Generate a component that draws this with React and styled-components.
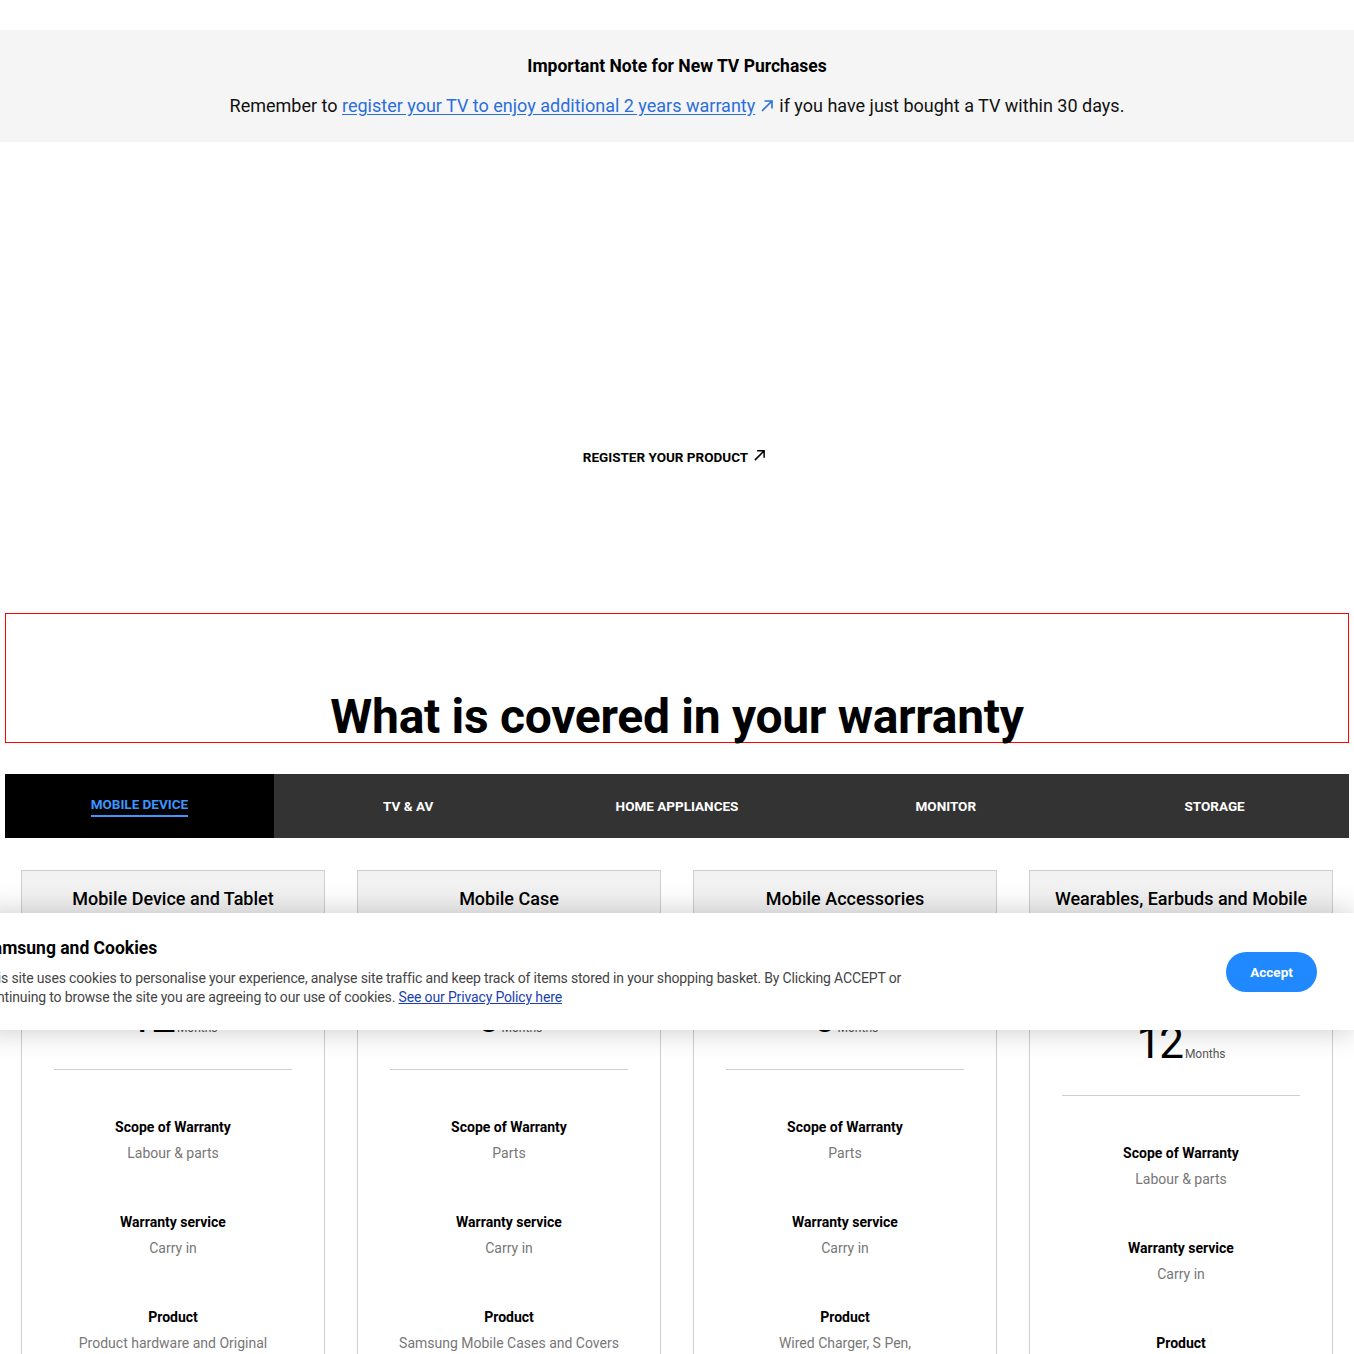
import React from "react";
import styled, { createGlobalStyle } from "styled-components";

const FONT = `Roboto, "Liberation Sans", sans-serif`;

const GlobalStyle = createGlobalStyle`
  html, body {
    margin: 0;
    padding: 0;
    background: #fff;
    font-family: ${FONT};
    color: #000;
  }
  #root {
    position: relative;
    min-height: 1354px;
    overflow: hidden;
  }
`;

const TopStrip = styled.div`
  height: 30px;
`;

const NoteBand = styled.section`
  background: #f5f5f5;
  padding: 25px 0 25px;
  text-align: center;
`;

const NoteTitle = styled.h3`
  margin: 0;
  font-size: 17.5px;
  line-height: 22px;
  font-weight: 700;
`;

const NoteText = styled.p`
  margin: 18px 0 0;
  font-size: 18px;
  line-height: 22px;
  color: #111;
`;

const NoteLink = styled.a`
  color: #2a6fdb;
  text-decoration: underline;
  text-underline-offset: 2px;
`;

const ArrowSvg = styled.svg`
  width: ${(p) => p.size}px;
  height: ${(p) => p.size}px;
  margin: 0 5px 0 5px;
  vertical-align: ${(p) => (p.size > 13 ? "-1px" : "0px")};
`;

const Arrow = ({ size = 14, color = "#000" }) => (
  <ArrowSvg size={size} viewBox="0 0 14 14" fill="none">
    <path d="M2 12 L12 2 M4.5 2 H12 V9.5" stroke={color} strokeWidth="1.6" />
  </ArrowSvg>
);

const RegisterArea = styled.section`
  height: 471px;
  box-sizing: border-box;
  padding-top: 305px;
  text-align: center;
`;

const RegisterLink = styled.a`
  font-size: 13.5px;
  line-height: 20px;
  font-weight: 700;
  color: #000;
  text-decoration: none;
`;

const Main = styled.main`
  margin: 0 5px;
`;

const HeadingBox = styled.div`
  border: 1px solid #ff0000;
  height: 130px;
  box-sizing: border-box;
  padding-top: 72px;
  text-align: center;
`;

const Heading = styled.h2`
  margin: 0;
  font-size: 48px;
  line-height: 62px;
  font-weight: 700;
  letter-spacing: -0.3px;
`;

const TabBar = styled.nav`
  margin-top: 31px;
  display: grid;
  grid-template-columns: repeat(5, 1fr);
  height: 64px;
  background: #333;
`;

const Tab = styled.div`
  display: flex;
  align-items: center;
  justify-content: center;
  background: ${(p) => (p.active ? "#000" : "transparent")};
`;

const TabLabel = styled.span`
  font-size: 13.5px;
  font-weight: 700;
  line-height: 18px;
  color: ${(p) => (p.active ? "#3d95ff" : "#fff")};
  padding-bottom: 2px;
  border-bottom: 2px solid ${(p) => (p.active ? "#3d95ff" : "transparent")};
  margin-top: ${(p) => (p.active ? "0" : "4px")};
`;

const CardGrid = styled.div`
  margin-top: 32px;
  padding: 0 16px;
  display: grid;
  grid-template-columns: repeat(4, 1fr);
  gap: 32px;
  align-items: start;
`;

const Card = styled.article`
  border: 1px solid #cfcfcf;
  background: #fff;
`;

const CardHead = styled.div`
  background: #f2f2f2;
  padding: 15px 16px 16px;
  text-align: center;
`;

const CardTitle = styled.h4`
  margin: 0;
  font-size: 18px;
  line-height: 26px;
  font-weight: 500;
  white-space: pre-line;
`;

const CardBody = styled.div`
  padding: 67px 32px 0;
  text-align: center;
`;

const Period = styled.div`
  display: flex;
  justify-content: center;
  align-items: baseline;
  gap: 3px;
`;

const PeriodNum = styled.span`
  font-size: 44px;
  line-height: 44px;
  font-weight: 400;
  letter-spacing: -2px;
`;

const PeriodUnit = styled.span`
  font-size: 12px;
  color: #555;
`;

const Divider = styled.hr`
  border: 0;
  border-top: 1px solid #cfcfcf;
  margin: 30px 0 47px;
`;

const Spec = styled.div`
  margin-bottom: 49px;
`;

const SpecLabel = styled.div`
  font-size: 14px;
  line-height: 20px;
  font-weight: 700;
`;

const SpecValue = styled.div`
  margin-top: 6px;
  font-size: 14px;
  line-height: 20px;
  color: #777;
  white-space: pre-line;
`;

const CookieBar = styled.div`
  position: absolute;
  top: 913px;
  left: -18px;
  right: 0;
  height: 117px;
  box-sizing: border-box;
  background: #fff;
  box-shadow: 0 0 28px rgba(0, 0, 0, 0.22);
  display: flex;
  align-items: center;
  justify-content: space-between;
  padding: 0 37px 0 0;
`;

const CookieText = styled.div`
  align-self: flex-start;
  padding-top: 22px;
`;

const CookieTitle = styled.div`
  font-size: 17.5px;
  line-height: 26px;
  font-weight: 700;
`;

const CookieBody = styled.p`
  margin: 8px 0 0;
  font-size: 14px;
  line-height: 19px;
  letter-spacing: -0.15px;
  color: #444;
`;

const PolicyLink = styled.a`
  color: #1a3fb0;
  text-decoration: underline;
`;

const AcceptButton = styled.button`
  width: 91px;
  height: 40px;
  border: 0;
  border-radius: 20px;
  background: #2189ff;
  color: #fff;
  font-family: ${FONT};
  font-size: 13.5px;
  font-weight: 700;
  cursor: pointer;
`;

const tabs = ["MOBILE DEVICE", "TV & AV", "HOME APPLIANCES", "MONITOR", "STORAGE"];

const cards = [
  {
    title: "Mobile Device and Tablet",
    months: "12",
    scope: "Labour & parts",
    service: "Carry in",
    product: "Product hardware and Original\nAccessories",
  },
  {
    title: "Mobile Case",
    months: "6",
    scope: "Parts",
    service: "Carry in",
    product: "Samsung Mobile Cases and Covers",
  },
  {
    title: "Mobile Accessories",
    months: "6",
    scope: "Parts",
    service: "Carry in",
    product: "Wired Charger, S Pen,\nWireless Charger",
  },
  {
    title: "Wearables, Earbuds and Mobile\nAccessories",
    months: "12",
    scope: "Labour & parts",
    service: "Carry in",
    product: "Galaxy Watch, Galaxy Buds",
  },
];

function WarrantyCard({ card }) {
  return (
    <Card>
      <CardHead>
        <CardTitle>{card.title}</CardTitle>
      </CardHead>
      <CardBody>
        <Period>
          <PeriodNum>{card.months}</PeriodNum>
          <PeriodUnit>Months</PeriodUnit>
        </Period>
        <Divider />
        <Spec>
          <SpecLabel>Scope of Warranty</SpecLabel>
          <SpecValue>{card.scope}</SpecValue>
        </Spec>
        <Spec>
          <SpecLabel>Warranty service</SpecLabel>
          <SpecValue>{card.service}</SpecValue>
        </Spec>
        <Spec>
          <SpecLabel>Product</SpecLabel>
          <SpecValue>{card.product}</SpecValue>
        </Spec>
      </CardBody>
    </Card>
  );
}

export default function App() {
  return (
    <>
      <GlobalStyle />
      <TopStrip />
      <NoteBand>
        <NoteTitle>Important Note for New TV Purchases</NoteTitle>
        <NoteText>
          Remember to{" "}
          <NoteLink href="#">register your TV to enjoy additional 2 years warranty</NoteLink>
          <Arrow size={14} color="#2a6fdb" />
          if you have just bought a TV within 30 days.
        </NoteText>
      </NoteBand>
      <RegisterArea>
        <RegisterLink href="#">
          REGISTER YOUR PRODUCT
          <Arrow size={13} color="#000" />
        </RegisterLink>
      </RegisterArea>
      <Main>
        <HeadingBox>
          <Heading>What is covered in your warranty</Heading>
        </HeadingBox>
        <TabBar>
          {tabs.map((t, i) => (
            <Tab key={t} active={i === 0}>
              <TabLabel active={i === 0}>{t}</TabLabel>
            </Tab>
          ))}
        </TabBar>
        <CardGrid>
          {cards.map((c) => (
            <WarrantyCard key={c.title} card={c} />
          ))}
        </CardGrid>
      </Main>
      <CookieBar>
        <CookieText>
          <CookieTitle>Samsung and Cookies</CookieTitle>
          <CookieBody>
            This site uses cookies to personalise your experience, analyse site traffic and keep track of items stored in your shopping basket. By Clicking ACCEPT or
            <br />
            continuing to browse the site you are agreeing to our use of cookies.{" "}
            <PolicyLink href="#">See our Privacy Policy here</PolicyLink>
          </CookieBody>
        </CookieText>
        <AcceptButton>Accept</AcceptButton>
      </CookieBar>
    </>
  );
}
